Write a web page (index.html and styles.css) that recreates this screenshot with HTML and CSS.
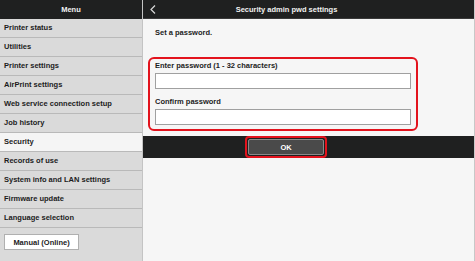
FILE: index.html
```html
<!DOCTYPE html>
<html lang="en">
<head>
    <meta charset="UTF-8" />
    <title>Security admin pwd settings</title>
    <link rel="stylesheet" href="styles.css">
</head>
<body>

    <aside class="sidebar">
        <div class="side-head">Menu</div>
        <ul class="menu">
            <li>Printer status</li>
            <li>Utilities</li>
            <li>Printer settings</li>
            <li>AirPrint settings</li>
            <li>Web service connection setup</li>
            <li>Job history</li>
            <li class="active">Security</li>
            <li>Records of use</li>
            <li>System info and LAN settings</li>
            <li>Firmware update</li>
            <li>Language selection</li>
        </ul>
        <button class="manual">Manual (Online)</button>
    </aside>

    <main class="content">
        <div class="top-bar">
            <span class="back">
                <svg width="6" height="9" viewBox="0 0 6 9"><polyline points="5,0.5 1,4.5 5,8.5" fill="none" stroke="#d8d8d8" stroke-width="1.2"/></svg>
            </span>
            <span class="title">Security admin pwd settings</span>
        </div>

        <p class="intro">Set a password.</p>

        <div class="pwd-box">
            <label>Enter password (1 - 32 characters)</label>
            <input type="password">
            <label class="second">Confirm password</label>
            <input type="password">
        </div>

        <div class="action-bar">
            <span class="ring"><button class="ok">OK</button></span>
        </div>
    </main>

</body>
</html>
```

FILE: styles.css
```css
body { margin: 0; width: 475px; height: 261px; display: flex; font-family: "Liberation Sans", Arial, sans-serif; font-size: 7.5px; font-weight: bold; color: #1c1c1c; overflow: hidden; }

.sidebar { width: 142px; background: #dadada; border-right: 1px solid #c4c4c4; }
.side-head { height: 19px; line-height: 19px; background: #1f2020; color: #f2f2f2; text-align: center; }
.menu { list-style: none; margin: 0; padding: 0; }
.menu li { height: 18px; line-height: 18px; padding-left: 4px; border-bottom: 1px solid #b9b9b9; white-space: nowrap; }
.menu li.active { background: #f5f5f5; }
.manual { display: block; margin: 6px 0 0 4px; width: 75px; height: 16px; padding: 0; background: #fff; border: 1px solid #b0b0b0; font: inherit; color: #1c1c1c; }

.content { flex: 1; background: #f6f6f6; border-right: 1px solid #c8c8c8; }
.top-bar { height: 19px; background: #1f2020; color: #f2f2f2; display: flex; align-items: center; padding: 0 51px 0 7px; border-bottom: 1px solid #3a3a3a; box-sizing: border-box; }
.back { display: flex; width: 6px; }
.title { flex: 1; text-align: center; padding-right: 6px; }

.intro { margin: 0; padding: 7px 0 0 12px; line-height: 13px; }

.pwd-box { margin: 18px 0 0 5px; width: 256px; padding: 0 5px 4px 5px; border: 2px solid #e3131d; border-radius: 6px; }
.pwd-box label { display: block; line-height: 13px; margin-bottom: 1px; }
.pwd-box label.second { margin-top: 6px; }
.pwd-box input { display: block; width: 100%; height: 16px; box-sizing: border-box; margin: 0; padding: 0 3px; border: 1px solid #a0a0a0; background: #fff; }

.action-bar { margin-top: 5px; height: 22px; background: #1f2020; display: flex; align-items: center; justify-content: center; padding-right: 45px; }
.ring { display: flex; padding: 1px; border: 2px solid #e3131d; border-radius: 4px; }
.ok { width: 76px; height: 16px; padding: 0; background: #4a4a4a; border: 1px solid #8a8a8a; border-radius: 2px; color: #fff; font: inherit; }
```
